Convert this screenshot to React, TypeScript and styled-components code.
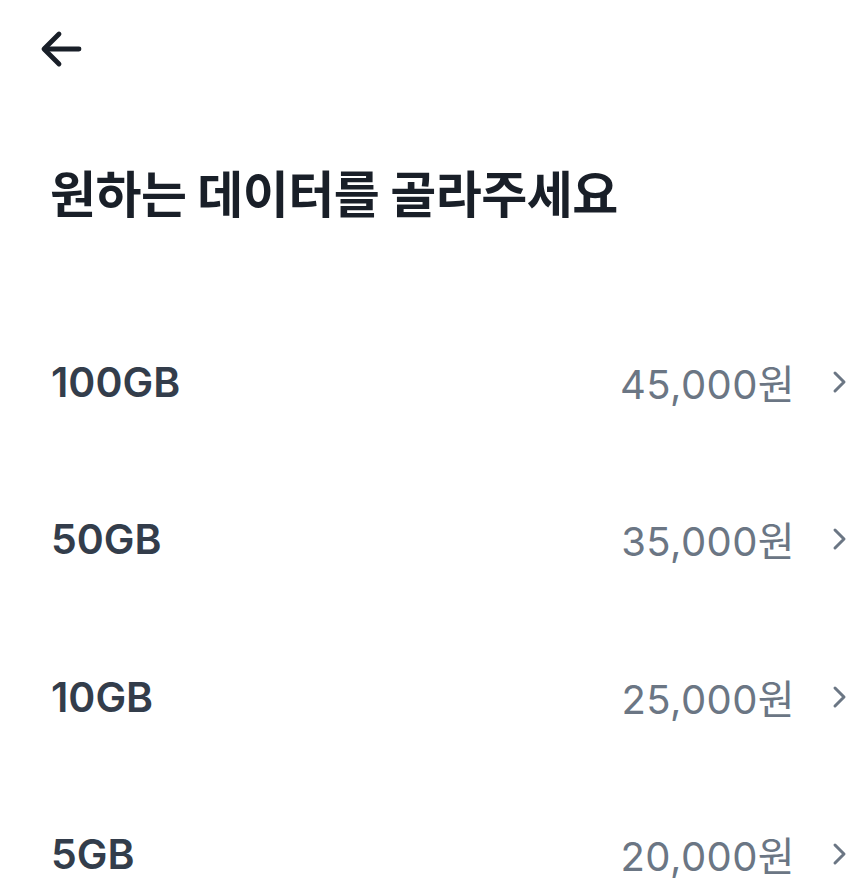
import React from "react";
import styled, { createGlobalStyle } from "styled-components";

const Global = createGlobalStyle`
  html, body { margin: 0; padding: 0; background: #fff; }
  body { font-family: "Noto Sans CJK KR", "Noto Sans", sans-serif; }
`;

const Page = styled.div`
  width: 865px;
  height: 889px;
  overflow: hidden;
  background: #fff;
  display: flex;
  flex-direction: column;
`;

const TopBar = styled.div`
  height: 100px;
  display: flex;
  align-items: flex-start;
  padding: 29px 0 0 36px;
  box-sizing: border-box;
`;

const BackButton = styled.button`
  border: none;
  background: none;
  padding: 0;
  width: 50px;
  height: 40px;
  display: flex;
  align-items: center;
  justify-content: center;
  color: #191f28;
`;

const Title = styled.h1`
  margin: 61px 0 0 50px;
  font-size: 50px;
  line-height: 60px;
  font-weight: 700;
  color: #191f28;
  letter-spacing: -0.5px;
`;

const List = styled.ul`
  list-style: none;
  margin: 131px 0 0 0;
  padding: 0 12px 0 51px;
  display: flex;
  flex-direction: column;
  gap: 97.4px;
`;

const Row = styled.li`
  height: 60px;
  display: flex;
  align-items: center;
  justify-content: space-between;
`;

const Label = styled.span`
  font-family: Inter, "Noto Sans CJK KR", sans-serif;
  font-size: 41px;
  font-weight: 600;
  color: #333d4b;
  letter-spacing: 0;
`;

const Right = styled.div`
  display: flex;
  align-items: center;
  gap: 34px;
`;

const Price = styled.span`
  font-family: Inter, "Noto Sans CJK KR", sans-serif;
  font-size: 40px;
  font-weight: 400;
  color: #6b7684;
  letter-spacing: 0.4px;
`;

const Chevron = styled.svg`
  width: 24px;
  height: 28px;
  color: #6b7684;
`;

const items = [
  { label: "100GB", price: "45,000원" },
  { label: "50GB", price: "35,000원" },
  { label: "10GB", price: "25,000원" },
  { label: "5GB", price: "20,000원" },
];

export default function App() {
  return (
    <Page>
      <Global />
      <TopBar>
        <BackButton aria-label="back">
          <svg width="44" height="40" viewBox="0 0 44 40" fill="none" stroke="currentColor" strokeWidth="4.8" strokeLinecap="round" strokeLinejoin="round">
            <path d="M40 20H6" />
            <path d="M20 5L5 20l15 15" />
          </svg>
        </BackButton>
      </TopBar>
      <Title>원하는 데이터를 골라주세요</Title>
      <List>
        {items.map((it) => (
          <Row key={it.label}>
            <Label>{it.label}</Label>
            <Right>
              <Price>{it.price}</Price>
              <Chevron viewBox="0 0 24 28" fill="none" stroke="currentColor" strokeWidth="3" strokeLinecap="round" strokeLinejoin="round">
                <path d="M6 5l9 9-9 9" />
              </Chevron>
            </Right>
          </Row>
        ))}
      </List>
    </Page>
  );
}
